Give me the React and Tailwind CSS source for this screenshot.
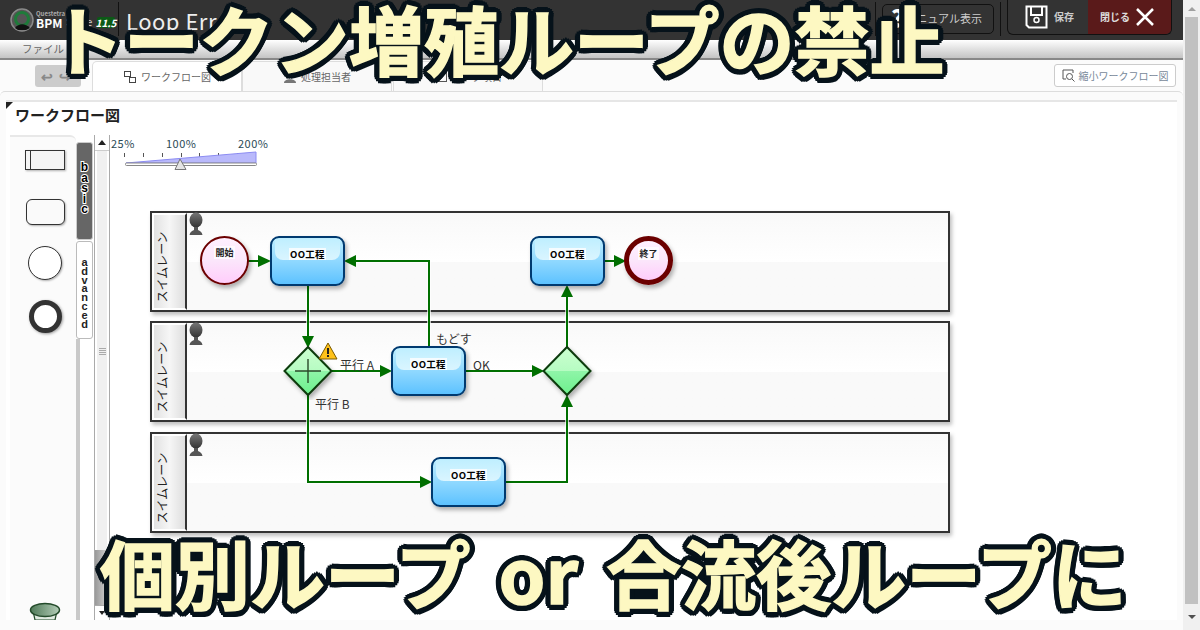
import React from "react";

const JP = "font-['Noto_Sans_CJK_JP','Noto_Sans',sans-serif]";
const HEADLINE =
  "absolute whitespace-nowrap text-[75px] font-bold leading-[90px] text-[#fdf8c2] [text-shadow:6px_0_0_#06121a,5.5px_2.3px_0_#06121a,4.2px_4.2px_0_#06121a,2.3px_5.5px_0_#06121a,0_6px_0_#06121a,-2.3px_5.5px_0_#06121a,-4.2px_4.2px_0_#06121a,-5.5px_2.3px_0_#06121a,-6px_0_0_#06121a,-5.5px_-2.3px_0_#06121a,-4.2px_-4.2px_0_#06121a,-2.3px_-5.5px_0_#06121a,0_-6px_0_#06121a,2.3px_-5.5px_0_#06121a,4.2px_-4.2px_0_#06121a,5.5px_-2.3px_0_#06121a,3px_0_0_#06121a,-3px_0_0_#06121a,0_3px_0_#06121a,0_-3px_0_#06121a] [-webkit-text-stroke:1.5px_#fdf8c2]";

function Arrow({ d, head }) {
  return (
    <g>
      <path d={d} fill="none" stroke="#ffffff" strokeWidth="4" opacity="0.7" />
      <path d={d} fill="none" stroke="#006f00" strokeWidth="2" />
      <polygon points={head} fill="#006f00" />
    </g>
  );
}

function Person({ className }) {
  return (
    <svg className={className} width="16" height="24" viewBox="0 0 16 24">
      <defs>
        <linearGradient id="pg" x1="0" y1="0" x2="0" y2="1">
          <stop offset="0" stopColor="#777" />
          <stop offset="1" stopColor="#333" />
        </linearGradient>
      </defs>
      <ellipse cx="8" cy="8" rx="6.5" ry="7.5" fill="url(#pg)" />
      <path d="M6 15 H10 V18 C12 19 14 20 14.5 23 H1.5 C2 20 4 19 6 18 Z" fill="#555" />
    </svg>
  );
}

function Lane({ className }) {
  return (
    <div className={`absolute left-[40px] flex h-[101px] w-[800px] border-2 border-[#333] shadow-[2px_3px_4px_rgba(0,0,0,0.25)] ${className}`}>
      <div className="flex w-[35px] shrink-0 items-center justify-start border-r-2 border-[#333] bg-gradient-to-r from-[#e2e2e2] via-[#f6f6f6] to-[#dedede] border-l-2 border-l-white border-t-2 border-t-white border-b-2 border-b-white">
        <span className="ml-[-28px] mt-[10px] w-[72px] -rotate-90 whitespace-nowrap text-center text-[12px] leading-none text-[#222]">スイムレーン</span>
      </div>
      <div className="relative flex-1 bg-gradient-to-b from-[#f9f9f9] from-0% via-[#ffffff] via-50% to-[#f9f9f9] to-50%">
        <Person className="absolute left-[1px] top-[-1px]" />
      </div>
    </div>
  );
}

function Task({ className }) {
  return (
    <div className={`absolute h-[50px] w-[75px] overflow-hidden rounded-[9px] border-2 border-[#003a70] bg-gradient-to-b from-[#bdeeff] to-[#5cc2ff] shadow-[2px_3px_4px_rgba(0,0,0,0.3)] ${className}`}>
      <div className="mx-[3px] mt-[1px] flex h-[21px] items-center justify-center rounded-b-[8px] bg-gradient-to-b from-[#c0efff] to-[#daf5ff]">
        <span className="mt-[9px] bg-white/80 px-[1px] text-[9.5px] font-bold leading-[12px] tracking-[0.3px] text-black">OO工程</span>
      </div>
    </div>
  );
}

function EventCircle({ className, label, ring }) {
  return (
    <div className={`absolute flex h-[49px] w-[49px] justify-center overflow-hidden rounded-full border-[#6b0000] bg-gradient-to-b from-[#fff0ff] via-[#fbe6fb] to-[#ffcdfb] shadow-[2px_3px_4px_rgba(0,0,0,0.3)] ${ring} ${className}`}>
      <span className="h-[13px] bg-white/70 px-[1px] text-[9px] font-bold leading-[13px] text-[#222]">{label}</span>
    </div>
  );
}

function Label({ className, children }) {
  return <span className={`absolute whitespace-nowrap text-[12px] leading-none text-[#333] ${className}`}>{children}</span>;
}

function Canvas() {
  return (
    <div className="relative flex-1 overflow-hidden bg-white">
      {/* zoom slider */}
      <span className="absolute left-[1px] top-[8px] text-[11px] leading-none tracking-[0.5px] text-[#2b4a55]">25%</span>
      <span className="absolute left-[56px] top-[8px] text-[11px] leading-none tracking-[0.5px] text-[#2b4a55]">100%</span>
      <span className="absolute left-[128px] top-[8px] text-[11px] leading-none tracking-[0.5px] text-[#2b4a55]">200%</span>
      <svg className="absolute left-[10px] top-[18px]" width="155" height="26" viewBox="0 0 155 26">
        <g stroke="#555" strokeWidth="1">
          {[4.5, 23.5, 42.5, 61.5, 79.5, 98.5, 117.5, 135.5].map((x) => (
            <line key={x} x1={x} x2={x} y1="5" y2="9" />
          ))}
        </g>
        <polygon points="6,15 136,4 136,15" fill="#b9b9fb" stroke="#8c8cf2" />
        <rect x="5.5" y="15" width="131" height="2.5" rx="1" fill="#fff" stroke="#888" />
        <polygon points="60,11 55,21.5 66,21.5" fill="#e4e4e4" stroke="#777" />
      </svg>

      {/* lanes */}
      <Lane className="top-[81px]" />
      <Lane className="top-[191px]" />
      <Lane className="top-[302px]" />

      {/* connectors: origin of this layer is the canvas */}
      <svg className="absolute left-0 top-0" width="900" height="480" viewBox="0 0 900 480">
        <Arrow d="M138 131 H150" head="148,125 161,131 148,137" />
        <Arrow d="M198 155 V208" head="192,206 198,218 204,206" />
        <Arrow d="M319 216 V131 H240" head="234,131 246,125 246,137" />
        <Arrow d="M222 241 H272" head="270,235 282,241 270,247" />
        <Arrow d="M355 241 H423" head="422,235 434,241 422,247" />
        <Arrow d="M457 217 V165" head="457,155 451,167 463,167" />
        <Arrow d="M494 131 H506" head="504,125 516,131 504,137" />
        <Arrow d="M198 265 V352 H312" head="310,346 322,352 310,358" />
        <Arrow d="M395 352 H457 V277" head="457,265 451,277 463,277" />
      </svg>

      {/* nodes */}
      <EventCircle className="left-[90px] top-[106px] pt-[8px]" label="開始" ring="border-2" />
      <Task className="left-[160px] top-[106px]" />
      <Task className="left-[420px] top-[106px]" />
      <EventCircle className="left-[514px] top-[106px] pt-[6px]" label="終了" ring="border-[5px]" />
      <Task className="left-[281px] top-[216px]" />
      <Task className="left-[321px] top-[327px]" />

      <svg className="absolute left-[170px] top-[210px]" width="60" height="60" viewBox="0 0 60 60">
        <defs>
          <linearGradient id="gw" x1="0" y1="0" x2="0" y2="1">
            <stop offset="0" stopColor="#ccffd0" />
            <stop offset="0.5" stopColor="#b6fcc2" />
            <stop offset="0.5" stopColor="#8ff5a8" />
            <stop offset="1" stopColor="#6cf08c" />
          </linearGradient>
          <filter id="ds" x="-20%" y="-20%" width="150%" height="150%">
            <feDropShadow dx="2" dy="3" stdDeviation="2" floodOpacity="0.3" />
          </filter>
        </defs>
        <polygon points="28,7 51.5,31 28,55 4.5,31" fill="url(#gw)" stroke="#0b3a0b" strokeWidth="2" filter="url(#ds)" />
        <path d="M28 19 V43 M15 31 H41" stroke="#2a4a2a" strokeWidth="1.4" />
      </svg>
      <svg className="absolute left-[429px] top-[210px]" width="60" height="60" viewBox="0 0 60 60">
        <polygon points="28,7 51.5,31 28,55 4.5,31" fill="url(#gw)" stroke="#0b3a0b" strokeWidth="2" filter="url(#ds)" />
      </svg>

      {/* warning */}
      <svg className="absolute left-[208px] top-[212px]" width="20" height="18" viewBox="0 0 20 18">
        <polygon points="10,1 19,17 1,17" fill="#ffc21a" stroke="#7a5a00" strokeWidth="1" />
        <rect x="9" y="6" width="2" height="6" fill="#222" />
        <rect x="9" y="13" width="2" height="2" fill="#222" />
      </svg>

      <Label className="left-[230px] top-[229px]">平行 A</Label>
      <Label className="left-[205px] top-[268px]">平行 B</Label>
      <Label className="left-[326px] top-[203px]">もどす</Label>
      <Label className="left-[363px] top-[229px]">OK</Label>
    </div>
  );
}

function Palette() {
  return (
    <div className="flex w-[94px] shrink-0">
      <div className="ml-[10px] flex w-[66px] flex-col items-center rounded-tr-[6px] border-t-2 border-[#e8e8e8] bg-[#fbfbfb] pl-[4px] pt-[13px]">
        <div className="flex h-[20px] w-[40px] shrink-0 border border-[#333] bg-[#f4f4f4] shadow-[1px_1px_2px_rgba(0,0,0,0.3)]">
          <div className="w-[5px] border-r border-[#333]" />
        </div>
        <div className="mt-[29px] h-[26px] w-[39px] shrink-0 rounded-[6px] border border-[#333] bg-[#fafafa] shadow-[1px_1px_2px_rgba(0,0,0,0.3)]" />
        <div className="mt-[21px] h-[34px] w-[34px] shrink-0 rounded-full border border-[#333] bg-white shadow-[1px_1px_2px_rgba(0,0,0,0.3)]" />
        <div className="mt-[20px] h-[33px] w-[33px] shrink-0 rounded-full border-[5px] border-[#333] bg-white shadow-[1px_1px_3px_rgba(0,0,0,0.4)]" />
        <svg className="mt-auto" width="32" height="18" viewBox="0 0 32 18">
          <defs>
            <linearGradient id="bk" x1="0" y1="0" x2="1" y2="0">
              <stop offset="0" stopColor="#4f7a58" />
              <stop offset="1" stopColor="#b4cdb8" />
            </linearGradient>
          </defs>
          <path d="M4 9 L6 18 H26 L28 9" fill="#dfeae0" stroke="#234a2a" strokeWidth="1.2" />
          <ellipse cx="16" cy="8" rx="14.5" ry="6.5" fill="url(#bk)" stroke="#234a2a" strokeWidth="1.5" />
        </svg>
      </div>
      <div className="flex w-[18px] shrink-0 flex-col pt-[7px]">
        <div className="flex h-[98px] w-[17px] flex-col items-center rounded-[3px] border border-[#ccc] bg-[#666] pt-[19px]">
          {"basic".split("").map((c, i) => (
            <span key={i} className="text-[12px] font-bold leading-[10.5px] text-black [-webkit-text-stroke:2px_#fff] [paint-order:stroke_fill] font-['Liberation_Sans',sans-serif]">{c}</span>
          ))}
        </div>
        <div className="mt-[1px] flex h-[98px] w-[17px] flex-col items-center rounded-[3px] border border-[#bbb] bg-white pt-[16px]">
          {"advanced".split("").map((c, i) => (
            <span key={i} className="text-[11px] font-bold leading-[8.8px] text-[#222] font-['Liberation_Sans',sans-serif]">{c}</span>
          ))}
        </div>
        <div className="w-[4px] flex-1 bg-[#c9c9c9]" />
      </div>
    </div>
  );
}

function PaletteScroll() {
  return (
    <div className="flex w-[16px] shrink-0 flex-col border-x border-[#aaa] bg-[#f0f0f0]">
      <div className="flex h-[16px] items-center justify-center border-b border-[#ccc] bg-white">
        <span className="h-0 w-0 border-x-[4px] border-b-[5px] border-x-transparent border-b-[#222]" />
      </div>
      <div className="flex flex-1 flex-col items-center justify-start border-x-2 border-white pt-[197px]">
        <div className="flex flex-col gap-[1px]">
          <span className="h-px w-[7px] bg-[#aaa]" />
          <span className="h-px w-[7px] bg-[#aaa]" />
          <span className="h-px w-[7px] bg-[#aaa]" />
          <span className="h-px w-[7px] bg-[#aaa]" />
        </div>
      </div>
      <div className="h-[55px] bg-gradient-to-r from-[#999] to-[#d8d8d8]" />
      <div className="flex h-[15px] items-center justify-center border-t border-[#aaa] bg-white">
        <span className="h-0 w-0 border-x-[3px] border-t-[4px] border-x-transparent border-t-[#222]" />
      </div>
    </div>
  );
}

function Header() {
  return (
    <div className="flex h-[40px] shrink-0 items-start bg-[#333] text-white">
      <svg className="ml-[10px] mt-[8px] shrink-0" width="24" height="24" viewBox="0 0 24 24">
        <circle cx="12" cy="12" r="11" fill="#555" stroke="#8a8a8a" strokeWidth="1.5" />
        <circle cx="12" cy="11" r="6.5" fill="none" stroke="#1f7a3a" strokeWidth="3" />
        <path d="M5 20 C9 15 15 15 20 20 L16 22 H8 Z" fill="#111" />
      </svg>
      <div className="ml-[2px] mt-[10px] flex w-[30px] flex-col leading-none">
        <span className="text-[6px] font-bold leading-[7px] text-[#aaa]">Questetra</span>
        <span className="text-[12px] font-bold leading-[11px] text-white">BPM</span>
      </div>
      <span className="mt-[16px] w-[26px] text-[11px] leading-none text-[#ccc]">Suite</span>
      <span className="ml-[5px] mt-[17px] flex h-[11px] w-[18px] items-center justify-center rounded-[2px] bg-[#0c5a16] text-[10px] font-bold italic leading-none text-white">11.5</span>
      <div className="ml-[3px] mt-[2px] h-[34px] w-px bg-[#111]" />
      <span className="ml-[7px] mt-[7px] whitespace-nowrap text-[22px] leading-[26px] tracking-[0.5px] text-[#eee]">Loop Error</span>
      <div className="flex-1" />
      <div className="mt-[2px] h-[34px] w-px bg-[#111]" />
      <div className="ml-[6px] mt-[4px] flex h-[30px] w-[112px] items-start rounded-[5px] border border-[#111] pl-[8px] pr-[11px]">
        <span className="text-[24px] font-black leading-[26px] text-white">?</span>
        <span className="ml-auto mt-[8px] whitespace-nowrap text-[11px] leading-none text-[#ccc]">マニュアル表示</span>
      </div>
      <div className="ml-[6px] mt-[2px] h-[34px] w-px bg-[#111]" />
      <div className="ml-[6px] flex h-[35px] w-[165px] overflow-hidden rounded-b-[6px] border border-t-0 border-[#111]">
        <div className="flex w-[80px] items-center pl-[17px]">
          <svg width="23" height="24" viewBox="0 0 23 24">
            <path d="M1.5 1.5 H21.5 V22.5 H4 L1.5 20 Z" fill="none" stroke="#fff" strokeWidth="2" />
            <path d="M6 2 V10 H17 V2" fill="none" stroke="#fff" strokeWidth="2" />
            <circle cx="11.5" cy="15" r="2.5" fill="none" stroke="#fff" strokeWidth="1.5" />
          </svg>
          <span className="ml-[6px] text-[10px] font-bold leading-none text-[#ccc]">保存</span>
        </div>
        <div className="flex flex-1 items-center bg-[#5a1a1a] pl-[12px]">
          <span className="text-[10px] font-bold leading-none text-[#ddd]">閉じる</span>
          <svg className="ml-[5px]" width="20" height="20" viewBox="0 0 20 20">
            <path d="M2 2 L18 18 M18 2 L2 18" stroke="#fff" strokeWidth="2.5" />
          </svg>
        </div>
      </div>
      <div className="w-[11px]" />
    </div>
  );
}

function Tab({ className, children }) {
  return (
    <div className={`flex h-[30px] w-[150px] shrink-0 items-center justify-center gap-[4px] rounded-t-[5px] border border-b-0 border-[#ddd] text-[10px] leading-none text-[#666] ${className}`}>
      {children}
    </div>
  );
}

export default function App() {
  return (
    <div className={`relative flex h-[630px] w-[1200px] overflow-hidden bg-white ${JP}`}>
      <div className="flex min-w-0 flex-1 flex-col">
        <Header />
        <div className="flex h-[20px] shrink-0 items-center border-b-2 border-[#888] bg-gradient-to-b from-[#ffffff] to-[#c4c4c4] pl-[22px] text-[10.5px] leading-none text-[#666]">
          ファイル
        </div>
        <div className="flex h-[31px] shrink-0 items-end bg-[#fbfbfb] pt-[2px]">
          <div className="mb-[4px] ml-[35px] flex h-[22px] w-[46px] items-center gap-[6px] rounded-[3px] bg-[#ccc] pl-[6px]">
            <span className="text-[14px] font-bold leading-none text-[#888]">↩</span>
            <span className="text-[14px] font-bold leading-none text-[#888]">↪</span>
          </div>
          <Tab className="ml-[11px] bg-white">
            <svg width="14" height="14" viewBox="0 0 14 14" fill="none" stroke="#444">
              <rect x="1.5" y="1.5" width="6" height="5" />
              <rect x="6.5" y="7.5" width="6" height="5" />
            </svg>
            ワークフロー図
          </Tab>
          <Tab className="bg-[#f9f9f9]">
            <svg width="14" height="14" viewBox="0 0 14 14" fill="#777">
              <circle cx="7" cy="4" r="3" />
              <path d="M1 13 C1 8 13 8 13 13 Z" />
            </svg>
            処理担当者
          </Tab>
          <Tab className="ml-[1px] bg-[#f9f9f9]">
            <svg width="14" height="14" viewBox="0 0 14 14" fill="none" stroke="#555">
              <rect x="1.5" y="2.5" width="11" height="9" />
            </svg>
            データ項目
          </Tab>
          <div className="flex-1" />
          <div className="mb-[4px] mr-[7px] flex h-[23px] w-[122px] items-center justify-center gap-[4px] rounded-[3px] border border-[#ccc] bg-white text-[10px] leading-none text-[#789]">
            <svg width="13" height="13" viewBox="0 0 13 13" fill="none" stroke="#555">
              <path d="M4 10 H1 V1 H11 V4" />
              <circle cx="7.5" cy="7.5" r="3" />
              <path d="M10 10 L12.5 12.5" />
            </svg>
            縮小ワークフロー図
          </div>
        </div>
        <div className="flex flex-1 flex-col rounded-t-[5px] border-t border-[#ddd] bg-[#fbfbfb] pl-[6px] pr-[6px] pt-[8px] pb-[10px]">
          <div className="relative flex min-h-0 flex-1 flex-col border-t-2 border-[#e6e6e6] bg-white">
            <span className="absolute left-0 top-0 h-0 w-0 border-b-[7px] border-l-[7px] border-b-transparent border-l-[#222]" />
            <div className="h-[28px] shrink-0 pl-[9px] pt-[5px] text-[15px] font-bold leading-none text-[#222]">ワークフロー図</div>
            <div className="flex min-h-0 flex-1">
              <div className="ml-[-6px] mt-[5px] flex">
                <Palette />
                <PaletteScroll />
              </div>
              <Canvas />
            </div>
          </div>
        </div>
      </div>

      {/* page scrollbar */}
      <div className="flex w-[17px] shrink-0 flex-col bg-[#f0f0f0]">
        <div className="flex h-[17px] items-center justify-center">
          <span className="h-0 w-0 border-x-[4px] border-b-[4px] border-x-transparent border-b-[#a0a0a0]" />
        </div>
        <div className="mx-[2px] flex-1 bg-[#c1c1c1]" />
        <div className="flex h-[26px] items-center justify-center">
          <span className="h-0 w-0 border-x-[4px] border-t-[4px] border-x-transparent border-t-[#505050]" />
        </div>
      </div>

      {/* overlaid headlines */}
      <div className={`${HEADLINE} left-[49px] top-[-7px]`}>トークン増殖ループの禁止</div>
      <div className={`${HEADLINE} left-[100px] top-[527px] [word-spacing:11px]`}>個別ループ or 合流後ループに</div>
    </div>
  );
}
